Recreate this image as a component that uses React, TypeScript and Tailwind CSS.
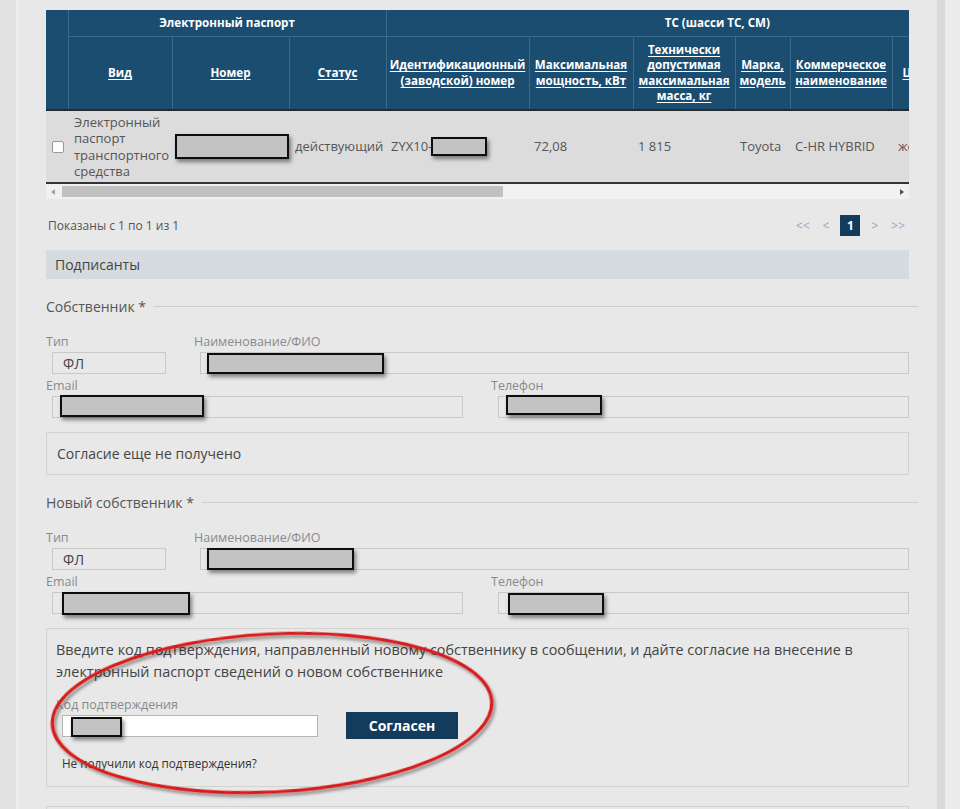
import React from "react";

function Redact({ className }: { className: string }) {
  return (
    <span
      className={
        "absolute bg-[#c3c3c3] border-2 border-[#0d0d0d] shadow-[2px_3px_4px_rgba(0,0,0,0.45)] " +
        className
      }
    />
  );
}

function Label({ children }: { children: React.ReactNode }) {
  return <div className="h-[14px] leading-[14px] text-[12.5px] text-[#8a8a8a] whitespace-nowrap">{children}</div>;
}

const inputCls = "relative mt-[3px] h-[22px] border border-[#c9c9c9]";

function PersonFields({
  nameR,
  emailR,
  phoneR,
}: {
  nameR: React.ReactNode;
  emailR: React.ReactNode;
  phoneR: React.ReactNode;
}) {
  return (
    <>
      <div className="mt-[20px] flex">
        <div className="w-[148px]">
          <Label>Тип</Label>
          <div className="mt-[3px] ml-[6px] w-[114px] h-[22px] border border-[#c9c9c9] pl-[10px] flex items-center text-[14px] text-[#444]">
            ФЛ
          </div>
        </div>
        <div className="flex-1">
          <Label>Наименование/ФИО</Label>
          <div className={inputCls + " ml-[6px]"}>{nameR}</div>
        </div>
      </div>
      <div className="mt-[5px] flex">
        <div className="w-[445px]">
          <Label>Email</Label>
          <div className={inputCls + " ml-[6px] w-[411px]"}>{emailR}</div>
        </div>
        <div className="flex-1">
          <Label>Телефон</Label>
          <div className={inputCls + " ml-[7px]"}>{phoneR}</div>
        </div>
      </div>
    </>
  );
}

function Legend({ text }: { text: string }) {
  return (
    <div className="mt-[18px] h-[18px] flex items-center -mr-[9px]">
      <span className="text-[14px] text-[#555]">{text}</span>
      <div className="flex-1 h-px bg-[#cdcdcd] ml-[8px]" />
    </div>
  );
}

const th =
  "border-r border-b border-[#3c6a8b] text-white font-bold text-[11.6px] leading-[15.5px] align-middle text-center px-[2px]";

const td = "text-[13px] text-[#555] align-middle px-[5px] whitespace-nowrap overflow-hidden";

export default function App() {
  return (
    <div className="relative w-[960px] h-[809px] overflow-hidden flex font-['Open_Sans','Noto_Sans',sans-serif]">
      <div className="w-[16px] bg-[#e2e2e2]" />
      <div className="w-[3px] bg-[#eeeeee]" />
      <div className="w-[918px] bg-[#e8e8e8] pl-[27px] pr-[28px] pt-[10px]">
        {/* table */}
        <div className="w-[863px] overflow-hidden">
          <table className="table-fixed border-collapse w-[1002px]">
            <colgroup>
              <col className="w-[22px]" />
              <col className="w-[104px]" />
              <col className="w-[117px]" />
              <col className="w-[97px]" />
              <col className="w-[143px]" />
              <col className="w-[104px]" />
              <col className="w-[102px]" />
              <col className="w-[55px]" />
              <col className="w-[102px]" />
              <col className="w-[156px]" />
            </colgroup>
            <thead className="bg-[#1b4d71]">
              <tr className="h-[26px]">
                <th rowSpan={2} className="border-r border-[#3c6a8b] border-b-2 border-b-[#2a2a2a]" />
                <th colSpan={3} className={th}>
                  Электронный паспорт
                </th>
                <th colSpan={6} className={th + " border-r-0"}>
                  ТС (шасси ТС, СМ)
                </th>
              </tr>
              <tr className="h-[74px] border-b-2 border-[#2a2a2a]">
                {[
                  "Вид",
                  "Номер",
                  "Статус",
                  "Идентификационный (заводской) номер",
                  "Максимальная мощность, кВт",
                  "Технически допустимая максимальная масса, кг",
                  "Марка, модель",
                  "Коммерческое наименование",
                ].map((t) => (
                  <th key={t} className={th + " border-b-2 border-b-[#2a2a2a]"}>
                    <span className="underline underline-offset-2">{t}</span>
                  </th>
                ))}
                <th className={th + " border-b-2 border-b-[#2a2a2a] text-left pl-[10px]"}>
                  <span className="underline underline-offset-2">Цвет кузова</span>
                </th>
              </tr>
            </thead>
            <tbody>
              <tr className="h-[73px] bg-[#dcdcdc] border-b-2 border-[#333]">
                <td className="align-middle pl-[6px]">
                  <span className="block w-[12px] h-[12px] bg-white border border-[#9a9a9a] rounded-[2px]" />
                </td>
                <td className="text-[13px] text-[#555] align-middle leading-[16.5px] pl-[6px] pr-[4px]">
                  Электронный паспорт транспортного средства
                </td>
                <td className={td + " relative overflow-visible"}>
                  <span className="relative block h-[25px]">
                    <Redact className="-left-[2px] top-0 w-[114px] h-[25px]" />
                  </span>
                </td>
                <td className={td + " pl-[6px]"}>действующий</td>
                <td className={td + " overflow-visible"}>
                  <span className="flex items-center">
                    ZYX10-
                    <span className="relative inline-block w-[56px] h-[19px] -ml-[1px]">
                      <Redact className="left-0 top-0 w-[56px] h-[19px]" />
                    </span>
                  </span>
                </td>
                <td className={td}>72,08</td>
                <td className={td}>1 815</td>
                <td className={td}>Toyota</td>
                <td className={td}>C-HR HYBRID</td>
                <td className={td + " pl-[6px]"}>жемчужный</td>
              </tr>
            </tbody>
          </table>
          {/* scrollbar */}
          <div className="h-[15px] bg-[#f1f1f1] flex items-center relative">
            <span className="ml-[5px] w-0 h-0 border-y-[3px] border-y-transparent border-r-[4px] border-r-[#a3a3a3]" />
            <span className="ml-[7px] w-[441px] h-[11px] bg-[#c1c1c1]" />
            <span className="ml-auto mr-[5px] w-0 h-0 border-y-[3px] border-y-transparent border-l-[4px] border-l-[#505050]" />
          </div>
        </div>

        {/* pagination */}
        <div className="mt-[16px] h-[21px] flex items-center justify-between w-[863px]">
          <span className="text-[12px] text-[#555] pl-[2px]">Показаны с 1 по 1 из 1</span>
          <div className="flex items-center text-[12px] text-[#8ea2c6] pr-[4px]">
            <span>&lt;&lt;</span>
            <span className="ml-[13px]">&lt;</span>
            <span className="ml-[11px] w-[20px] h-[21px] bg-[#123b5c] text-white font-bold text-[12px] flex items-center justify-center">
              1
            </span>
            <span className="ml-[11px]">&gt;</span>
            <span className="ml-[13px]">&gt;&gt;</span>
          </div>
        </div>

        {/* signers bar */}
        <div className="mt-[14px] h-[29px] w-[863px] bg-[#d5dbdf] pl-[9px] flex items-center text-[14px] text-[#444]">
          Подписанты
        </div>

        <div className="w-[863px]">
          <Legend text="Собственник *" />
          <PersonFields
            nameR={<Redact className="left-[6px] top-0 w-[177px] h-[21px]" />}
            emailR={<Redact className="left-[7px] -top-[2px] w-[144px] h-[22px]" />}
            phoneR={<Redact className="left-[7px] -top-[2px] w-[96px] h-[20px]" />}
          />
          <div className="mt-[14px] h-[43px] border border-[#d2d2d2] pl-[10px] flex items-center text-[14px] text-[#444]">
            Согласие еще не получено
          </div>

          <Legend text="Новый собственник *" />
          <PersonFields
            nameR={<Redact className="left-[6px] -top-[1px] w-[147px] h-[22px]" />}
            emailR={<Redact className="left-[9px] -top-[1px] w-[128px] h-[23px]" />}
            phoneR={<Redact className="left-[9px] top-0 w-[96px] h-[22px]" />}
          />

          <div className="mt-[14px] h-[159px] border border-[#d2d2d2] px-[9px] pt-[10px]">
            <p className="text-[14.4px] leading-[22px] text-[#444] whitespace-nowrap">
              Введите код подтверждения, направленный новому собственнику в сообщении, и дайте согласие на внесение в
              <br />
              электронный паспорт сведений о новом собственнике
            </p>
            <div className="mt-[15px]">
              <Label>Код подтверждения</Label>
              <div className="flex items-center h-[27px]">
                <div className="relative ml-[6px] w-[256px] h-[22px] bg-white border border-[#b5b5b5]">
                  <Redact className="left-[8px] top-[1px] w-[51px] h-[20px]" />
                </div>
                <button className="ml-[28px] w-[112px] h-[27px] bg-[#123b5c] text-white font-bold text-[14px]">
                  Согласен
                </button>
              </div>
            </div>
            <div className="mt-[17px] pl-[6px] text-[11.7px] leading-[14px] text-[#333]">
              Не получили код подтверждения?
            </div>
          </div>
          <div className="mt-[19px] h-[20px] border border-[#d2d2d2]" />
        </div>
      </div>
      <div className="w-[8px] bg-[#dadada]" />
      <div className="flex-1 bg-[#ececec]" />

      <svg className="absolute left-0 top-0 pointer-events-none" width="960" height="809">
        <defs>
          <filter id="sh" x="-10%" y="-20%" width="120%" height="140%">
            <feDropShadow dx="2" dy="3" stdDeviation="1.8" floodColor="#000" floodOpacity="0.4" />
          </filter>
        </defs>
        <ellipse
          cx="272"
          cy="713"
          rx="220"
          ry="79"
          transform="rotate(-3 272 713)"
          fill="none"
          stroke="#d81a1a"
          strokeWidth="3.2"
          filter="url(#sh)"
        />
      </svg>
    </div>
  );
}
